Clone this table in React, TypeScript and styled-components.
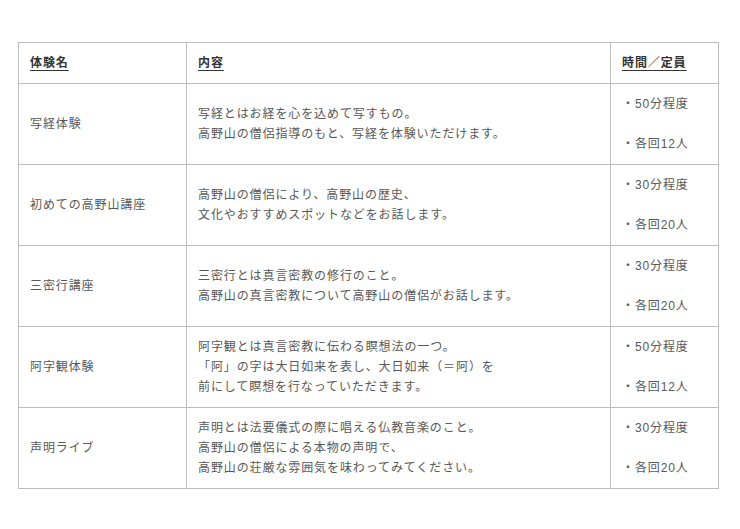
import React from "react";
import styled, { createGlobalStyle } from "styled-components";

const GlobalStyle = createGlobalStyle`
  html, body {
    margin: 0;
    padding: 0;
    background: #fff;
  }
  body {
    font-family: "Liberation Sans", "Noto Sans CJK JP", sans-serif;
  }
`;

const Page = styled.div`
  padding: 42px 22px 40px 18px;
`;

const Table = styled.table`
  width: 700px;
  border-collapse: collapse;
  table-layout: fixed;
  font-size: 12px;
  line-height: 20px;
  letter-spacing: 0.9px;
  color: #585858;
`;

const Th = styled.th<{ $width: number }>`
  box-sizing: border-box;
  width: ${(p) => p.$width}px;
  padding: 10px 11px;
  border: 1px solid #bdbdbd;
  text-align: left;
  font-weight: bold;
  color: #333;
  text-decoration: underline;
  text-underline-offset: 3px;
`;

const Td = styled.td`
  padding: 10px 11px;
  border: 1px solid #bdbdbd;
  vertical-align: middle;
  height: 60px;
`;

const Line = styled.div`
  white-space: nowrap;
`;

const Spacer = styled.div`
  height: 20px;
`;

type Experience = {
  name: string;
  content: string[];
  time: string;
  capacity: string;
};

const experiences: Experience[] = [
  {
    name: "写経体験",
    content: ["写経とはお経を心を込めて写すもの。", "高野山の僧侶指導のもと、写経を体験いただけます。"],
    time: "・50分程度",
    capacity: "・各回12人",
  },
  {
    name: "初めての高野山講座",
    content: ["高野山の僧侶により、高野山の歴史、", "文化やおすすめスポットなどをお話します。"],
    time: "・30分程度",
    capacity: "・各回20人",
  },
  {
    name: "三密行講座",
    content: ["三密行とは真言密教の修行のこと。", "高野山の真言密教について高野山の僧侶がお話します。"],
    time: "・30分程度",
    capacity: "・各回20人",
  },
  {
    name: "阿字観体験",
    content: [
      "阿字観とは真言密教に伝わる瞑想法の一つ。",
      "「阿」の字は大日如来を表し、大日如来（＝阿）を",
      "前にして瞑想を行なっていただきます。",
    ],
    time: "・50分程度",
    capacity: "・各回12人",
  },
  {
    name: "声明ライブ",
    content: [
      "声明とは法要儀式の際に唱える仏教音楽のこと。",
      "高野山の僧侶による本物の声明で、",
      "高野山の荘厳な雰囲気を味わってみてください。",
    ],
    time: "・30分程度",
    capacity: "・各回20人",
  },
];

const App = () => {
  return (
    <Page>
      <GlobalStyle />
      <Table>
        <thead>
          <tr>
            <Th $width={168}>体験名</Th>
            <Th $width={424}>内容</Th>
            <Th $width={108}>時間／定員</Th>
          </tr>
        </thead>
        <tbody>
          {experiences.map((item) => (
            <tr key={item.name}>
              <Td>{item.name}</Td>
              <Td>
                {item.content.map((line) => (
                  <Line key={line}>{line}</Line>
                ))}
              </Td>
              <Td>
                <Line>{item.time}</Line>
                <Spacer />
                <Line>{item.capacity}</Line>
              </Td>
            </tr>
          ))}
        </tbody>
      </Table>
    </Page>
  );
};

export default App;
